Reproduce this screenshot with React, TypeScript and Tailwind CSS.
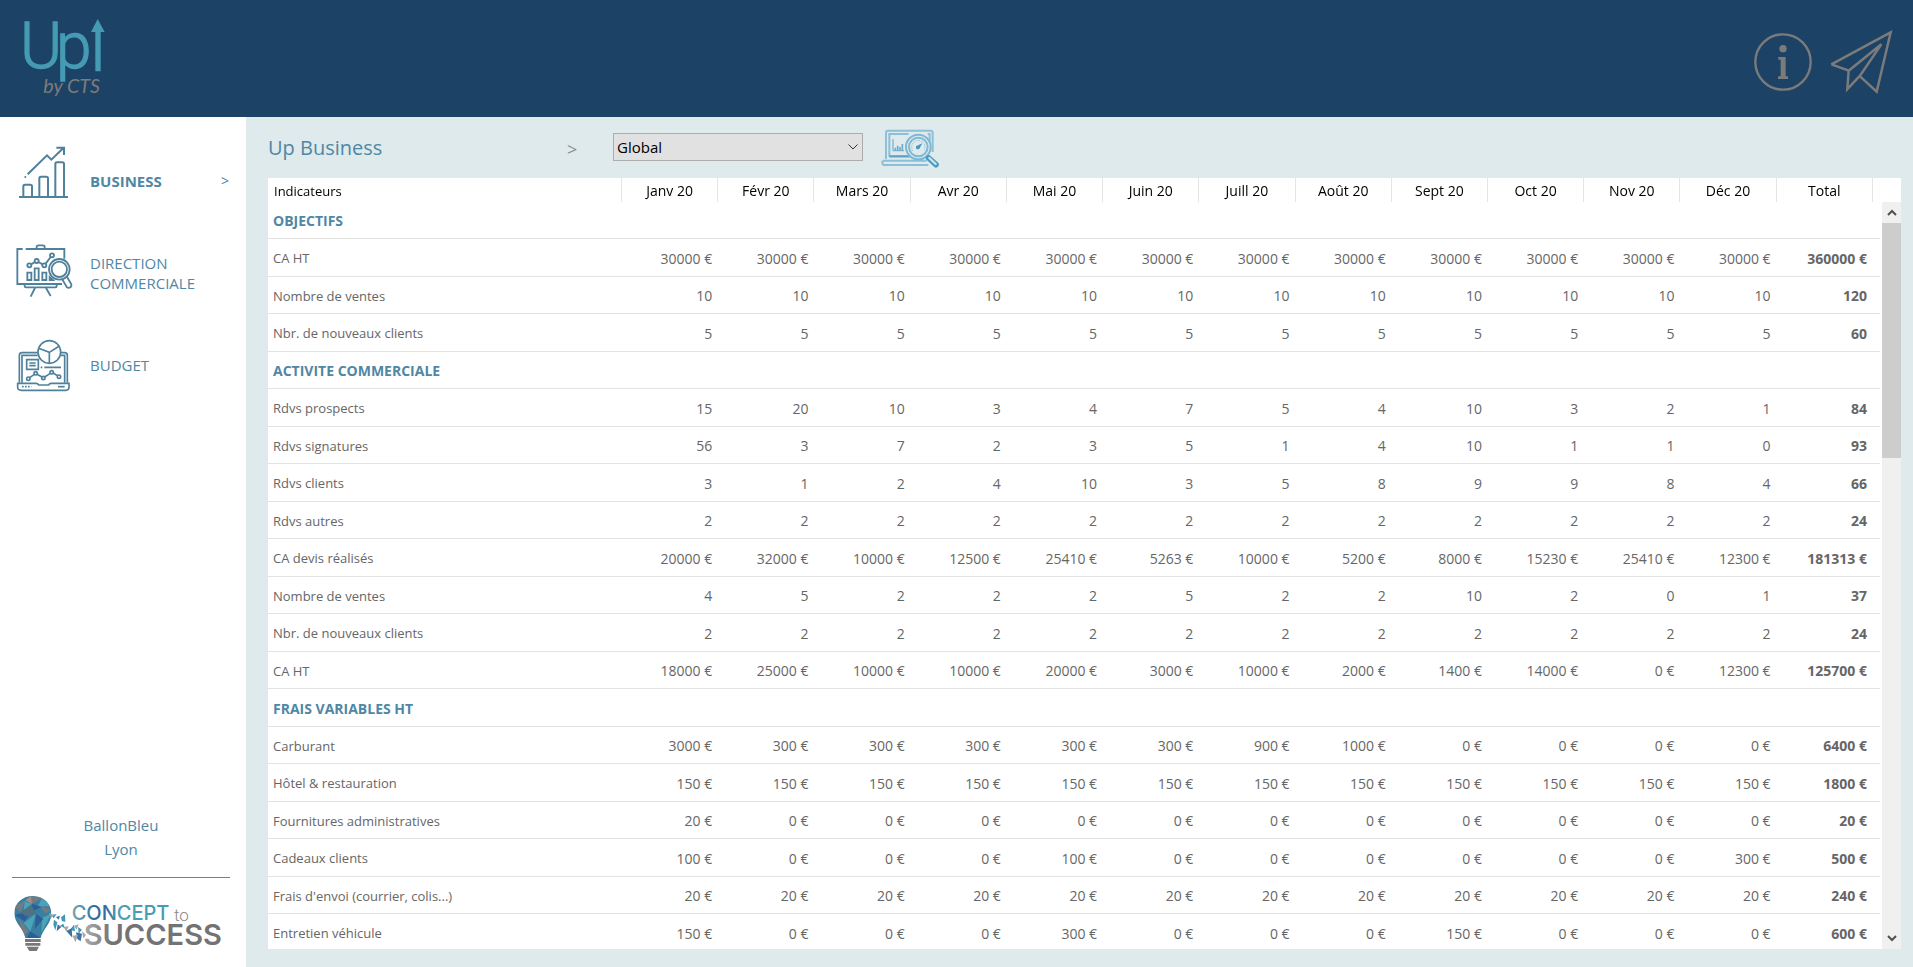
import React, { useState } from 'react';

interface Row {
  label: string;
  unit?: string;
  values?: number[];
  total?: number;
}

const MONTHS = ['Janv 20', 'Févr 20', 'Mars 20', 'Avr 20', 'Mai 20', 'Juin 20', 'Juill 20', 'Août 20', 'Sept 20', 'Oct 20', 'Nov 20', 'Déc 20'];

const repeat = (value: number) => MONTHS.map(() => value);

// Rows without values are section titles
const ROWS: Row[] = [
  { label: 'OBJECTIFS' },
  { label: 'CA HT', unit: '€', values: repeat(30000), total: 360000 },
  { label: 'Nombre de ventes', values: repeat(10), total: 120 },
  { label: 'Nbr. de nouveaux clients', values: repeat(5), total: 60 },
  { label: 'ACTIVITE COMMERCIALE' },
  { label: 'Rdvs prospects', values: [15, 20, 10, 3, 4, 7, 5, 4, 10, 3, 2, 1], total: 84 },
  { label: 'Rdvs signatures', values: [56, 3, 7, 2, 3, 5, 1, 4, 10, 1, 1, 0], total: 93 },
  { label: 'Rdvs clients', values: [3, 1, 2, 4, 10, 3, 5, 8, 9, 9, 8, 4], total: 66 },
  { label: 'Rdvs autres', values: repeat(2), total: 24 },
  { label: 'CA devis réalisés', unit: '€', values: [20000, 32000, 10000, 12500, 25410, 5263, 10000, 5200, 8000, 15230, 25410, 12300], total: 181313 },
  { label: 'Nombre de ventes', values: [4, 5, 2, 2, 2, 5, 2, 2, 10, 2, 0, 1], total: 37 },
  { label: 'Nbr. de nouveaux clients', values: repeat(2), total: 24 },
  { label: 'CA HT', unit: '€', values: [18000, 25000, 10000, 10000, 20000, 3000, 10000, 2000, 1400, 14000, 0, 12300], total: 125700 },
  { label: 'FRAIS VARIABLES HT' },
  { label: 'Carburant', unit: '€', values: [3000, 300, 300, 300, 300, 300, 900, 1000, 0, 0, 0, 0], total: 6400 },
  { label: 'Hôtel & restauration', unit: '€', values: repeat(150), total: 1800 },
  { label: 'Fournitures administratives', unit: '€', values: [20, 0, 0, 0, 0, 0, 0, 0, 0, 0, 0, 0], total: 20 },
  { label: 'Cadeaux clients', unit: '€', values: [100, 0, 0, 0, 100, 0, 0, 0, 0, 0, 0, 300], total: 500 },
  { label: "Frais d'envoi (courrier, colis...)", unit: '€', values: repeat(20), total: 240 },
  { label: 'Entretien véhicule', unit: '€', values: [150, 0, 0, 0, 300, 0, 0, 0, 150, 0, 0, 0], total: 600 },
];

const UpLogo = () => (
  <svg viewBox="30 0 300 351" className="h-[117px] w-[100px]" role="img" aria-label="Up! by CTS">
    <g fill="#459bb3" fontFamily="Roboto, sans-serif" fontWeight="300" fontSize="192">
      <text x="60" y="204" stroke="#459bb3" strokeWidth="4">U</text>
      <text x="168" y="204" stroke="#459bb3" strokeWidth="4">p</text>
      <path d="M293 57 L314 96 H302 V214 H286 V96 H273 Z" />
    </g>
    <text x="130" y="280" fill="#7d7b7b" fontFamily="Lato, sans-serif" fontStyle="italic" fontWeight="400" fontSize="59">by CTS</text>
  </svg>
);

const InfoIcon = () => (
  <svg viewBox="99 96 180 180" className="h-[60px] w-[60px]" fill="none" stroke="#7b7b7b">
    <circle cx="189" cy="186" r="83" strokeWidth="7" />
    <circle cx="189" cy="146" r="11" fill="#7b7b7b" stroke="none" />
    <path d="M175 171 H197 V229 H204 V237 H174 V229 H182 V179 H175 Z" fill="#7b7b7b" stroke="none" />
  </svg>
);

const PlaneIcon = () => (
  <svg viewBox="327 90 192 192" className="h-16 w-16" fill="none" stroke="#7b7b7b" strokeWidth="7.5">
    <path d="M334 193 L512 97 L470 275 L420 229 M334 193 L386 212 L382 267 L420 227 L484 133 L386 212" />
  </svg>
);

const BusinessIcon = () => (
  <svg viewBox="45 77 180 240" className="h-20 w-[60px] shrink-0" fill="none" stroke="#4f819b" strokeWidth="6">
    <path d="M57 245 H204" />
    <path d="M70 243 V213 Q70 208 75 208 H91 Q96 208 96 213 V243 M118 243 V189 Q118 184 123 184 H139 Q144 184 144 189 V243 M166 243 V146 Q166 141 171 141 H187 Q192 141 192 146 V243" />
    <path d="M83 177 L141 120 L154 133 L191 97 M169 97 H192 V119" />
    <circle cx="76" cy="185" r="3" fill="#4f819b" stroke="none" />
  </svg>
);

const DirectionIcon = () => (
  <svg viewBox="45 354 180 240" className="h-20 w-[60px] shrink-0" fill="none" stroke="#4f819b" strokeWidth="5.5">
    <path d="M68 402 H52 V507 H186 M77 402 H193 V431 M110 401 V396 Q110 391 115 391 H129 Q134 391 134 396 V401" />
    <path d="M74 509 V513 Q74 517 79 517 H166 Q170 517 170 513 V509 M105 519 L92 545 M138 519 L152 543" />
    <circle cx="88" cy="451" r="6" />
    <circle cx="110" cy="438" r="6" />
    <circle cx="133" cy="451" r="6" />
    <circle cx="156" cy="421" r="6" />
    <path d="M93 448 L105 441 M115 441 L128 448 M137 446 L152 426" />
    <path d="M82 495 V473 H94 V495 Z M104 495 V460 H116 V495 Z M127 495 V473 H139 V495 Z M149 495 V486 L159 495 Z" />
    <circle cx="178" cy="463" r="31" />
    <circle cx="178" cy="463" r="23" />
    <path d="M187 493 L200 516 Q206 521 212 516 Q215 513 214 508 L200 484" />
  </svg>
);

const BudgetIcon = () => (
  <svg viewBox="45 629 180 240" className="h-20 w-[60px] shrink-0" fill="none" stroke="#4f819b" strokeWidth="5">
    <path d="M58 802 V720 Q58 712 66 712 H113 M182 712 H194 Q202 712 202 720 V802" />
    <path d="M66 802 V720 H113 M183 720 H194 V802" />
    <path d="M53 804 H108 Q114 804 116 809 H146 Q148 804 154 804 H207 V816 Q207 825 197 825 H64 Q53 825 53 816 Z" />
    <circle cx="148" cy="710" r="34" />
    <path d="M116 699 L148 711 L178 692 M148 711 V743" />
    <path d="M80 733 H115 V762 H80 Z M88 743 H107 M88 751 H107 M133 756 H183 M122 756 H127" />
    <path d="M66 814 H94" strokeDasharray="5 4" />
    <path d="M174 814 H194" />
    <circle cx="85" cy="790" r="5" />
    <circle cx="107" cy="774" r="5" />
    <circle cx="130" cy="788" r="5" />
    <circle cx="155" cy="771" r="5" />
    <circle cx="177" cy="784" r="5" />
    <path d="M89 787 L103 777 M111 777 L126 785 M134 785 L151 774 M159 773 L173 781" />
  </svg>
);

const AnalyseIcon = () => (
  <svg viewBox="840 37 183 123" className="h-[41px] w-[61px]" fill="none">
    <g stroke="#8dbfd8" strokeWidth="6">
      <path d="M858 133 V54 Q858 48 864 48 H992 Q998 48 998 54 V112" />
      <path d="M868 126 V58 H926 M983 58 H989 V80" />
      <path d="M848 138 H980 M985 151 H855 Q847 151 847 144 V138" />
    </g>
    <path d="M868 125 H935" stroke="#5ba3c8" strokeWidth="7" />
    <path d="M879 73 V108 H912" stroke="#7fb7d3" strokeWidth="4" />
    <path d="M886 108 V99 M893 108 V93 M900 108 V97 M907 108 V88" stroke="#6eacce" strokeWidth="5" />
    <circle cx="955" cy="97" r="37" stroke="#7db8d5" strokeWidth="6" fill="#deeaeb" />
    <circle cx="955" cy="97" r="28" stroke="#7db8d5" strokeWidth="6" />
    <path d="M938 108 A20 20 0 1 1 972 108" stroke="#8dbfd8" strokeWidth="3" strokeDasharray="4 3" />
    <path d="M948 95 L967 86 L958 102 Q951 106 948 101 Z" fill="#4795c0" />
    <path d="M986 130 L1008 150" stroke="#4a97c0" strokeWidth="17" strokeLinecap="round" />
    <path d="M988 130 L1007 148" stroke="#d0e4ec" strokeWidth="7" strokeLinecap="round" />
  </svg>
);

const ConceptLogo = () => (
  <svg viewBox="40 310 642 189" className="h-[63px] w-[214px]" role="img" aria-label="Concept to Success">
    <defs>
      <clipPath id="bulb">
        <path d="M103 319 C137 319 158 344 158 372 C158 402 132 418 126 445 H80 C75 415 47 402 47 370 C47 342 70 319 103 319 Z" />
      </clipPath>
      <linearGradient id="concept" x1="0" x2="1">
        <stop offset="0" stopColor="#8a9ba3" />
        <stop offset="0.12" stopColor="#4596b0" />
        <stop offset="0.24" stopColor="#2f66a0" />
        <stop offset="0.38" stopColor="#35709f" />
        <stop offset="0.48" stopColor="#4a9fb6" />
        <stop offset="1" stopColor="#459bb3" />
      </linearGradient>
      <linearGradient id="success" x1="0" x2="1">
        <stop offset="0" stopColor="#a9adb0" />
        <stop offset="0.12" stopColor="#8a8c8e" />
        <stop offset="0.2" stopColor="#737373" />
        <stop offset="1" stopColor="#737373" />
      </linearGradient>
    </defs>
    <g clipPath="url(#bulb)">
      <path d="M40 310 H170 V450 H40 Z" fill="#3a7f9f" />
      <path d="M47 350 L78 335 L66 368 Z M97 319 L130 325 L100 342 Z M125 350 L158 360 L140 372 Z M60 385 L75 440 L90 425 Z" fill="#777b80" />
      <path d="M78 335 L100 342 L75 362 Z M130 325 L158 350 L118 350 Z M75 400 L112 372 L95 425 Z M130 385 L158 372 L128 430 Z" fill="#4ba3b9" />
      <path d="M47 375 L100 365 L78 395 Z M100 342 L128 352 L98 366 Z M112 372 L134 388 L108 418 Z M95 425 L126 445 H85 Z" fill="#2b5f99" />
      <path d="M66 368 L98 345 L112 372 L82 380 Z" fill="#507182" />
      <path d="M80 332 L97 319 L100 342 Z" fill="#a28f86" />
    </g>
    <path d="M79 448 H126 V457 H79 Z M80 460 H125 V468 H80 Z M84 471 H121 L114 484 H92 Z" fill="#77787a" />
    <path d="M158 376 L174 373 L165 386 Z M187 383 L199 374 L200 396 L190 395 Z M166 390 L176 398 L170 422 L164 405 Z M184 408 L194 402 L199 416 Z M214 420 L226 405 L229 425 Z M238 412 L250 420 L240 432 Z" fill="#4098b3" />
    <path d="M172 382 L184 378 L180 390 Z M177 404 L188 412 L174 425 Z M203 424 L219 416 L221 444 Z M232 428 L250 432 L246 455 L236 448 Z" fill="#3f6fa3" />
    <path d="M150 370 L166 376 L158 384 Z M195 412 L210 410 L203 426 Z M222 438 L238 436 L230 458 Z M226 408 L240 404 L234 420 Z M250 424 L262 436 L254 446 Z" fill="#9ea8ad" />
    <g fontFamily="Inter, sans-serif">
      <text x="219" y="392" fontSize="60" fontWeight="500" fill="url(#concept)">CONCEPT</text>
      <text x="526" y="394" fontFamily="Roboto, sans-serif" fontSize="51" fontWeight="300" fill="#85898b">to</text>
      <text x="255" y="466" fontSize="87" fontWeight="600" fill="url(#success)">SUCCESS</text>
    </g>
  </svg>
);

const NAV = [
  { id: 'business', label: 'BUSINESS', icon: <BusinessIcon /> },
  { id: 'direction', label: 'DIRECTION COMMERCIALE', icon: <DirectionIcon /> },
  { id: 'budget', label: 'BUDGET', icon: <BudgetIcon /> },
];

const Sidebar = () => {
  const [active, setActive] = useState('business');

  return (
    <aside className="flex w-[246px] shrink-0 flex-col bg-white text-[#4f87a5]">
      <nav className="flex flex-col gap-3 pt-6">
        {NAV.map((item) => (
          <button
            key={item.id}
            onClick={() => setActive(item.id)}
            className="flex cursor-pointer items-center pr-[17px] pl-[15px] text-left text-[15px] leading-5"
          >
            {item.icon}
            <span className={`ml-[15px] w-[120px] ${active === item.id ? 'font-bold' : ''}`}>{item.label}</span>
            {active === item.id && <span className="ml-auto text-sm">&gt;</span>}
          </button>
        ))}
      </nav>
      <div className="mt-auto px-3 pb-[11px]">
        <p className="pr-1 text-center text-[15px] leading-6">BallonBleu<br />Lyon</p>
        <hr className="mt-4 mr-1 mb-[15px] border-[#3f95b0]" />
        <ConceptLogo />
      </div>
    </aside>
  );
};

const IndicatorTable = () => (
  <table className="w-full table-fixed border-separate border-spacing-0 text-sm text-[#666]">
    <colgroup>
      <col className="w-[354px]" />
      {MONTHS.map((m) => <col key={m} />)}
      <col />
      <col className="w-[7px]" />
    </colgroup>
    <thead className="sticky top-0 bg-white text-black">
      <tr className="h-6">
        <th scope="col" className="border-r border-[#e5e5e5] pt-[2px] pl-[6px] text-left text-[13px] font-normal">Indicateurs</th>
        {MONTHS.map((m) => (
          <th key={m} scope="col" className="border-r border-[#e5e5e5] pt-[2px] font-normal">{m}</th>
        ))}
        <th scope="col" className="border-r border-[#e5e5e5] pt-[2px] font-normal">Total</th>
        <td />
      </tr>
    </thead>
    <tbody>
      {ROWS.map((row, i) => (
        <tr key={i} className="odd:h-[37px] even:h-[38px]">
          {row.values ? (
            <>
              <th scope="row" className="border-b border-[#e3e3e3] pt-[2px] pl-[5px] text-left text-[13px] font-normal">{row.label}</th>
              {row.values.map((v, j) => (
                <td key={j} className="border-b border-[#e3e3e3] pt-[2px] pr-[6px] text-right">{row.unit ? `${v} ${row.unit}` : v}</td>
              ))}
              <td className="border-b border-[#e3e3e3] pt-[2px] pr-[6px] text-right font-bold">{row.unit ? `${row.total} ${row.unit}` : row.total}</td>
              <td className="border-b border-[#e3e3e3]" />
            </>
          ) : (
            <th scope="rowgroup" colSpan={15} className="border-b border-[#e3e3e3] pt-[2px] pl-[5px] text-left font-bold text-[#4f87a5]">{row.label}</th>
          )}
        </tr>
      ))}
    </tbody>
  </table>
);

const Scrollbar = () => (
  <div className="ml-[2px] flex w-[19px] shrink-0 flex-col pt-6">
    <div className="flex flex-1 flex-col bg-[#f0f0f0]">
      <button aria-label="Défiler vers le haut" className="flex h-[21px] items-center justify-center">
        <svg viewBox="0 0 10 7" className="h-[7px] w-[10px]" fill="none" stroke="#505050" strokeWidth="2"><path d="M1 6 L5 2 L9 6" /></svg>
      </button>
      <div className="h-[235px] bg-[#cdcdcd]" />
      <button aria-label="Défiler vers le bas" className="mt-auto flex h-[21px] items-center justify-center">
        <svg viewBox="0 0 10 7" className="h-[7px] w-[10px]" fill="none" stroke="#505050" strokeWidth="2"><path d="M1 1 L5 5 L9 1" /></svg>
      </button>
    </div>
  </div>
);

export default function App() {
  return (
    <div className="flex h-screen flex-col bg-[#deeaeb] font-['Open_Sans','Noto_Sans',sans-serif]">
      <header className="flex h-[117px] shrink-0 items-center justify-between bg-[#1c4366] pr-5 pl-[10px]">
        <UpLogo />
        <div className="flex items-center gap-4 pt-[6px]">
          <button aria-label="Informations" className="cursor-pointer"><InfoIcon /></button>
          <button aria-label="Envoyer" className="cursor-pointer"><PlaneIcon /></button>
        </div>
      </header>

      <div className="flex min-h-0 flex-1">
        <Sidebar />
        <main className="flex min-w-0 flex-1 flex-col pr-3 pb-[18px] pl-[22px]">
          <div className="flex h-[61px] shrink-0 items-center">
            <h1 className="w-[299px] text-xl text-[#4f87a5]">Up Business</h1>
            <span className="w-[46px] pt-[2px] text-lg text-[#8c8c8c]">&gt;</span>
            <div className="relative mb-[2px]">
              <select aria-label="Vue" className="block h-7 w-[250px] appearance-none border border-[#adadad] bg-[#e1e1e1] px-[3px] text-[15px] leading-5 text-black">
                <option>Global</option>
              </select>
              <svg viewBox="0 0 10 6" className="pointer-events-none absolute top-[11px] right-[5px] h-[6px] w-[10px]" fill="none" stroke="#333"><path d="M0.5 0.5 L5 5 L9.5 0.5" /></svg>
            </div>
            <button aria-label="Analyse" className="ml-[17px] cursor-pointer"><AnalyseIcon /></button>
          </div>

          <div className="flex min-h-0 flex-1 bg-white">
            <div className="min-w-0 flex-1 overflow-y-auto [scrollbar-width:none]">
              <IndicatorTable />
            </div>
            <Scrollbar />
          </div>
        </main>
      </div>
    </div>
  );
}
